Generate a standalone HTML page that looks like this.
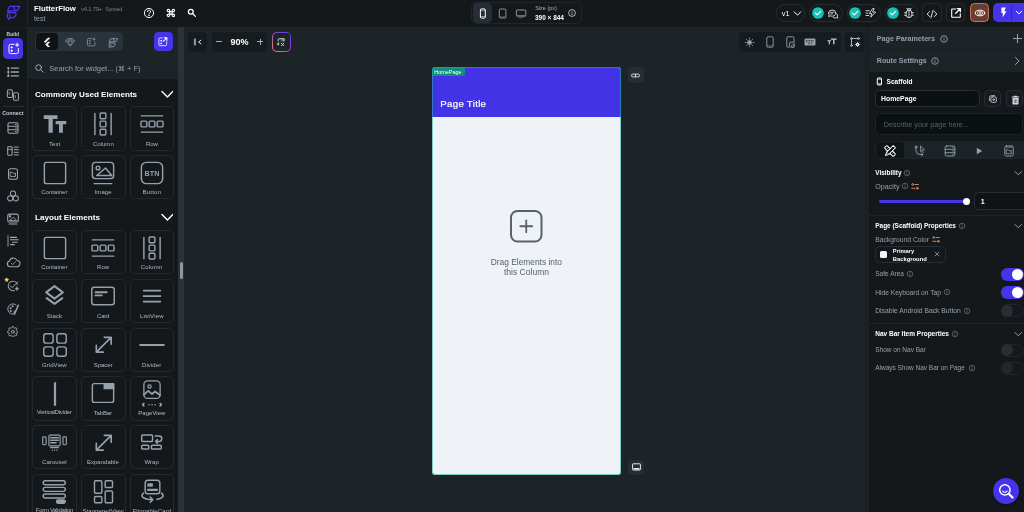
<!DOCTYPE html>
<html lang="en"><head><meta charset="utf-8"><title>FlutterFlow - test</title>
<style>
html,body{margin:0;padding:0}
body{width:1024px;height:512px;overflow:hidden;position:relative;background:#1d2428;font-family:"Liberation Sans",sans-serif}
.a{position:absolute;box-sizing:border-box;display:block}
.t{white-space:nowrap}
#root{position:absolute;left:0;top:0;width:1024px;height:512px;overflow:hidden;will-change:transform}
</style></head><body><div id="root">
<div class="a" style="left:0px;top:0px;width:1024px;height:27px;background:#14181b;"></div>
<div class="a" style="left:0px;top:27px;width:27px;height:485px;background:#14181b;"></div>
<div class="a" style="left:27px;top:0px;width:1px;height:512px;background:#1d2428;"></div>
<div class="a" style="left:28px;top:27px;width:150px;height:52px;background:#1d2428;"></div>
<div class="a" style="left:28px;top:79px;width:150px;height:433px;background:#14181b;"></div>
<div class="a" style="left:178px;top:27px;width:5.8px;height:485px;background:#2a323a;"></div>
<div class="a" style="left:179.5px;top:262px;width:3px;height:17px;background:#8b97a2;border-radius:1.5px;"></div>
<div class="a" style="left:868.6px;top:27px;width:156px;height:45px;background:#1d2428;"></div>
<div class="a" style="left:868.6px;top:72px;width:156px;height:440px;background:#14181b;"></div>
<div class="a" style="left:864.6px;top:27px;width:4px;height:485px;background:#1a2024;"></div>
<svg class="a" style="left:5px;top:4px" width="18" height="18" viewBox="5 4 18 18" fill="none" stroke="#4b39ef" stroke-width="1.25" stroke-linejoin="round"><path d="M9.6 6.4H19.8L17 10.8H7.6zM13.200 6.400L15.100 10.600M8.500 11L9.400 12.600H15.100L16.200 14.500L14.100 17.700H10.300L8.800 19.300L7.100 16.400zM9.400 14.300L10.300 17.700"/></svg>
<span class="a t" style="left:34.00px;top:4px;font-size:7.79px;line-height:9px;color:#fff;font-weight:700;">FlutterFlow</span>
<span class="a t" style="left:81.00px;top:6px;font-size:6.00px;line-height:6px;color:#73808b;letter-spacing:-0.273px;">v4.1.79+</span>
<span class="a t" style="left:105.30px;top:6px;font-size:5.60px;line-height:6px;color:#73808b;letter-spacing:-0.297px;">Synced</span>
<span class="a t" style="left:34.10px;top:15px;font-size:7.01px;line-height:7px;color:#95a1ac;">test</span>
<svg class="a" style="left:143px;top:7.4px" width="12" height="12" viewBox="-6 -6 12 12" fill="none" stroke="#fff" stroke-width="1"><circle r="4.6"/><path d="M-1.5 -1.3a1.5 1.5 0 1 1 2.3 1.2c-.6.4-.8.7-.8 1.3" stroke-linecap="round"/><circle cy="2.7" r=".35" fill="#fff"/></svg>
<svg class="a" style="left:165.6px;top:8.2px" width="9.8" height="9.8" viewBox="0 0 24 24" fill="none" stroke="#fff" stroke-width="2.8"><path d="M9 9V6a3 3 0 1 0-3 3h12a3 3 0 1 0-3-3v12a3 3 0 1 0 3-3H6a3 3 0 1 0 3 3z"/></svg>
<svg class="a" style="left:187.2px;top:8.2px" width="9.6" height="9.6" viewBox="0 0 24 24" fill="none" stroke="#fff" stroke-width="3.2" stroke-linecap="round"><circle cx="9.5" cy="9.5" r="6"/><path d="M14.5 14.5L21 21"/></svg>
<div class="a" style="left:471.3px;top:1.5px;width:110.4px;height:22px;border:1px solid #20272c;border-radius:5.5px;"></div>
<div class="a" style="left:473.3px;top:3.2px;width:18.8px;height:19.4px;background:#262d34;border-radius:4.5px;"></div>
<svg class="a" style="left:479px;top:7.6px" width="8" height="11" viewBox="0 0 8 11" fill="none" stroke="#fff" stroke-width="1"><rect x="1.400" y="0.900" width="4.900" height="9.200" rx="1.100"/><path d="M1.400 2.400h4.900M1.400 8.500h4.900" stroke-width=".5"/></svg>
<svg class="a" style="left:497.5px;top:7.5px" width="9" height="11" viewBox="0 0 9 11" fill="none" stroke="#95a1ac" stroke-width=".9"><rect x="1.300" y="1" width="6.600" height="9" rx="1.200"/><path d="M1.300 8.800h6.600" stroke-width=".5"/></svg>
<svg class="a" style="left:515px;top:7.5px" width="12" height="11" viewBox="0 0 12 11" fill="none" stroke="#95a1ac" stroke-width=".9"><rect x="1.400" y="2" width="9.400" height="5.800" rx=".6"/><path d="M4 9.800h4.200M1.400 8.600h9.400" stroke-width=".5"/></svg>
<span class="a t" style="left:535.20px;top:5px;font-size:5.53px;line-height:6px;color:#a3aeb8;">Size (px)</span>
<span class="a t" style="left:535.00px;top:14px;font-size:6.48px;line-height:7px;color:#fff;font-weight:700;">390 × 844</span>
<svg class="a" style="left:567px;top:8px" width="10" height="10" viewBox="-5 -5 10 10" fill="none" stroke="#e0e3e7" stroke-width="0.75"><circle r="3.4"/><path d="M0 -0.300V1.600M0 -1.700V-1.600" stroke-linecap="round" stroke-width=".7"/></svg>
<div class="a" style="left:776px;top:4.2px;width:29px;height:17.5px;border:1px solid #262d34;border-radius:9px;"></div>
<span class="a t" style="left:781.80px;top:9px;font-size:7.39px;line-height:9px;color:#fff;">v1</span>
<svg class="a" style="left:792.5px;top:9.5px" width="9" height="7" viewBox="0 0 9 7" fill="none" stroke="#fff" stroke-width="1" stroke-linecap="round" stroke-linejoin="round"><path d="M1.2 1.8L4.500 5.200L7.800 1.800"/></svg>
<div class="a" style="left:809.2px;top:4.2px;width:33.39999999999998px;height:17.5px;border:1px solid #262d34;border-radius:9px;"></div>
<svg class="a" style="left:811.5px;top:7px" width="12" height="12" viewBox="-6 -6 12 12"><circle r="5.85" fill="#19c3b1"/><path d="M-2.6 0.1L-0.8 1.9L2.7 -1.7" fill="none" stroke="#fff" stroke-width="1.1" stroke-linecap="round" stroke-linejoin="round"/></svg>
<svg class="a" style="left:825.70px;top:6.50px" width="14" height="14" viewBox="-7 -7 14 14" fill="none" stroke="#e0e3e7" stroke-width="0.9" stroke-linecap="round" stroke-linejoin="round"><path d="M-4.400 -0.900a3.600 3.100 0 0 1 7.200 0a3.600 3.100 0 0 1 -5.200 2.800l-1.900 0.600l0.500 -1.700a3 3 0 0 1 -0.600 -1.700z"/><path d="M-2.400 -1.700h3.300M-2.400 -0.100h2" stroke-width=".8"/><path d="M0.300 3.500a3 2.600 0 0 0 3.300 0.200l1.200 0.400l-0.400 -1.200a2.800 2.600 0 0 0 -0.700 -3.200"/></svg>
<div class="a" style="left:846.6px;top:4.2px;width:34.39999999999998px;height:17.5px;border:1px solid #262d34;border-radius:9px;"></div>
<svg class="a" style="left:849px;top:7px" width="12" height="12" viewBox="-6 -6 12 12"><circle r="5.85" fill="#19c3b1"/><path d="M-2.6 0.1L-0.8 1.9L2.7 -1.7" fill="none" stroke="#fff" stroke-width="1.1" stroke-linecap="round" stroke-linejoin="round"/></svg>
<svg class="a" style="left:863.60px;top:6.40px" width="14" height="14" viewBox="-7 -7 14 14" fill="none" stroke="#e0e3e7" stroke-width="0.9" stroke-linecap="round" stroke-linejoin="round"><path d="M1.500 -4.200L-1.800 0.600H0.800L-0.300 4.200L4.600 -1H1.600L3 -4.200Z"/><path d="M-5 -2.300h3.200M-5 0.100h1.800M-5 2.500h2.800"/></svg>
<div class="a" style="left:885.2px;top:4.2px;width:33.0px;height:17.5px;border:1px solid #262d34;border-radius:9px;"></div>
<svg class="a" style="left:887.2px;top:7px" width="12" height="12" viewBox="-6 -6 12 12"><circle r="5.85" fill="#19c3b1"/><path d="M-2.6 0.1L-0.8 1.9L2.7 -1.7" fill="none" stroke="#fff" stroke-width="1.1" stroke-linecap="round" stroke-linejoin="round"/></svg>
<svg class="a" style="left:901.60px;top:6.40px" width="14" height="14" viewBox="-7 -7 14 14" fill="none" stroke="#e0e3e7" stroke-width="0.9" stroke-linecap="round" stroke-linejoin="round"><rect x="-2.900" y="-2.800" width="5.800" height="7.400" rx="2.800"/><path d="M0 -2.800V4.600M-1.700 -3.100a1.700 1.700 0 0 1 3.400 0M-2.900 -0.300H-4.500M-2.900 2.300H-4.500M2.900 -0.300H4.500M2.900 2.300H4.500M-2.200 -4.600l.8 .9M2.200 -4.600l-.8 .9" stroke-width=".85"/></svg>
<div class="a" style="left:922.2px;top:3px;width:19.4px;height:19.3px;border:1px solid #232a30;border-radius:4.5px;"></div>
<svg class="a" style="left:925.00px;top:6.50px" width="14" height="14" viewBox="-7 -7 14 14" fill="none" stroke="#e0e3e7" stroke-width="0.95" stroke-linecap="round" stroke-linejoin="round"><path d="M-2.300 -2.600L-4.800 0L-2.300 2.600M2.300 -2.600L4.800 0L2.300 2.600M1.100 -3.800L-1.100 3.800"/></svg>
<div class="a" style="left:946px;top:3px;width:19.4px;height:19.3px;border:1px solid #232a30;border-radius:4.5px;"></div>
<svg class="a" style="left:949.10px;top:6.40px" width="14" height="14" viewBox="-7 -7 14 14" fill="none" stroke="#fff" stroke-width="0.9" stroke-linecap="round" stroke-linejoin="round"><path d="M-0.500 -4H-3.700a.6 .6 0 0 0 -.6 .6V3.700a.6 .6 0 0 0 .6 .6H3.700a.6 .6 0 0 0 .6 -.6V0.800" stroke-width="1.100"/><path d="M-0.300 0.300L4.200 -4.200M1.200 -4.400H4.400V-1.200" stroke-width="1.300"/></svg>
<div class="a" style="left:969.8px;top:3px;width:19.4px;height:19.3px;background:#6a3e2f;border:1px solid #c8745a;border-radius:4.5px;"></div>
<svg class="a" style="left:972.60px;top:5.90px" width="14" height="14" viewBox="-7 -7 14 14" fill="none" stroke="#fff" stroke-width="0.95" stroke-linecap="round" stroke-linejoin="round"><ellipse rx="4.700" ry="2.800"/><circle cx="-0.900" r="1.750" stroke-width=".55"/><circle cx="0.900" r="1.750" stroke-width=".55"/></svg>
<div class="a" style="left:993.2px;top:3px;width:40px;height:19.3px;background:#4534ea;border-radius:5px;"></div>
<div class="a" style="left:1011.4px;top:5px;width:0.8px;height:15.5px;background:#3527b8;"></div>
<svg class="a" style="left:998.700px;top:7.300px" width="9" height="11" viewBox="0 0 9 11" fill="#fff"><path d="M2.400 0.500h4.400L5.300 4.200h2.200L3.700 10.300V6H2.400z"/></svg>
<svg class="a" style="left:1014.700px;top:10px" width="8" height="6" viewBox="0 0 8 6" fill="none" stroke="#fff" stroke-width="1" stroke-linecap="round" stroke-linejoin="round"><path d="M1.300 1.300L4 3.900L6.700 1.300"/></svg>
<span class="a t" style="left:6.60px;top:31px;font-size:5.04px;line-height:6px;color:#c5ccd3;font-weight:700;">Build</span>
<div class="a" style="left:3px;top:38.4px;width:20.2px;height:20.2px;background:#4534ea;border-radius:4.5px;"></div>
<div class="a" style="left:0px;top:26.6px;width:27px;height:0.8px;background:#1a1f23;"></div>
<svg class="a" style="left:6.80px;top:42.40px" width="13.6" height="13.6" viewBox="0 0 24 24" fill="none" stroke="#fff" stroke-width="1.7" stroke-linecap="round" stroke-linejoin="round"><path d="M12.500 4H6.500a3 3 0 0 0-3 3v10.500a3 3 0 0 0 3 3h10.500a3 3 0 0 0 3-3v-6"/><circle cx="8" cy="9.500" r="1.100" fill="#fff"/><circle cx="8" cy="15.500" r="1.100" fill="#fff"/><path d="M18 1.800l1 2.400 2.400 1-2.400 1-1 2.400-1-2.400-2.400-1 2.400-1z" fill="#fff" stroke-width=".8"/></svg>
<svg class="a" style="left:4.90px;top:64.00px" width="16" height="16" viewBox="-8 -8 16 16" fill="none" stroke="#9ba7b2" stroke-width="1.05" stroke-linecap="round" stroke-linejoin="round"><path d="M-1.800 -3.900H5.400M-1.800 0H5.400M-1.800 3.900H5.400" stroke-width="1.400"/><path d="M-4.700 -3.900V3.900" stroke-width=".7"/><circle cx="-4.700" cy="-3.900" r="1.100" fill="#a3aeb8" stroke="none"/><circle cx="-4.700" cy="0" r="1.100" fill="#a3aeb8" stroke="none"/><circle cx="-4.700" cy="3.900" r="1.100" fill="#a3aeb8" stroke="none"/></svg>
<svg class="a" style="left:5.10px;top:86.50px" width="16" height="16" viewBox="-8 -8 16 16" fill="none" stroke="#9ba7b2" stroke-width="1.05" stroke-linecap="round" stroke-linejoin="round"><rect x="-5.600" y="-5.200" width="5" height="7.600" rx="1.400"/><rect x="0.500" y="-2.300" width="5" height="7.600" rx="1.400"/><path d="M-3.800 -2.800v2M2.300 0.700v2" stroke-width=".8"/></svg>
<div class="a" style="left:3px;top:105.9px;width:21px;height:0.8px;background:#262d34;"></div>
<span class="a t" style="left:2.20px;top:110px;font-size:5.35px;line-height:6px;color:#c5ccd3;font-weight:700;">Connect</span>
<svg class="a" style="left:4.75px;top:120.40px" width="16" height="16" viewBox="-8 -8 16 16" fill="none" stroke="#9ba7b2" stroke-width="1.05" stroke-linecap="round" stroke-linejoin="round"><rect x="-5" y="-5.200" width="10" height="10.400" rx="1.300"/><path d="M-5 -1.800H5M-5 1.800H5"/><path d="M2.300 -3.500h1.200M2.300 0h1.200M2.300 3.500h1.200" stroke-width=".8"/></svg>
<svg class="a" style="left:4.75px;top:142.90px" width="16" height="16" viewBox="-8 -8 16 16" fill="none" stroke="#9ba7b2" stroke-width="1.05" stroke-linecap="round" stroke-linejoin="round"><rect x="-5.300" y="-4.200" width="4.400" height="8.400" rx=".9"/><path d="M-5.300 -1.600h4.400" stroke-width=".8"/><path d="M1.200 -3.900H5.400M1.200 -1.300H5.400M1.200 1.300H5.400M1.200 3.900H5.400" stroke-width="1"/></svg>
<svg class="a" style="left:5.00px;top:165.50px" width="16" height="16" viewBox="-8 -8 16 16" fill="none" stroke="#9ba7b2" stroke-width="1.05" stroke-linecap="round" stroke-linejoin="round"><rect x="-4.500" y="-5.300" width="9" height="10.600" rx="2"/><path d="M-2.500 -1.800h1.700l.8 1h2.500v3.200h-5z" stroke-width=".9"/></svg>
<svg class="a" style="left:4.85px;top:188.30px" width="16" height="16" viewBox="-8 -8 16 16" fill="none" stroke="#9ba7b2" stroke-width="1.05" stroke-linecap="round" stroke-linejoin="round"><circle cx="0" cy="-2.500" r="2.600"/><circle cx="-2.800" cy="2.300" r="2.600"/><circle cx="2.800" cy="2.300" r="2.600"/></svg>
<svg class="a" style="left:4.85px;top:210.60px" width="16" height="16" viewBox="-8 -8 16 16" fill="none" stroke="#9ba7b2" stroke-width="1.05" stroke-linecap="round" stroke-linejoin="round"><rect x="-5.300" y="-4.900" width="10.600" height="7.800" rx="1.700"/><circle cx="-3" cy="-2.700" r=".7"/><path d="M-3.300 1.300L0.600 -1.800L3.500 1.300z" stroke-width=".9"/><path d="M-4 5H4"/></svg>
<svg class="a" style="left:4.60px;top:233.40px" width="16" height="16" viewBox="-8 -8 16 16" fill="none" stroke="#9ba7b2" stroke-width="1.05" stroke-linecap="round" stroke-linejoin="round"><path d="M-5 -5.300V5.300" stroke-width=".9"/><path d="M-2.500 -3.600H3.500M-2.500 -1.200H5.300M-0.500 1.200H4.200M-2.500 3.600H1.300" stroke-width="1.100"/></svg>
<svg class="a" style="left:5.00px;top:255.20px" width="16" height="16" viewBox="-8 -8 16 16" fill="none" stroke="#9ba7b2" stroke-width="1.05" stroke-linecap="round" stroke-linejoin="round"><path d="M-3 3.800a2.900 2.900 0 0 1-.5-5.700a4 4 0 0 1 7.500-.7a3.200 3.200 0 0 1-.4 6.400z"/><path d="M-1.600 0.300l1.300 1.300l2.700-2.900" stroke-width=".9"/></svg>
<svg class="a" style="left:5.30px;top:278.00px" width="16" height="16" viewBox="-8 -8 16 16" fill="none" stroke="#9ba7b2" stroke-width="1.05" stroke-linecap="round" stroke-linejoin="round"><path d="M4.300 -1.800a4.700 4.700 0 1 0 -3 6.200"/><path d="M-2.700 -0.200l1.900 1.900L4.600 -4" stroke-width="1"/><path d="M3.900 0.700l.6 1.400 1.400.6-1.400.6-.6 1.400-.6-1.400-1.400-.6 1.400-.6z" fill="#a3aeb8" stroke-width=".4"/></svg>
<svg class="a" style="left:4.200px;top:277px" width="5.400" height="5.400" viewBox="0 0 24 24" fill="#f9cf58"><path d="M12 1l3.400 7 7.600 1-5.500 5.300 1.300 7.700L12 18.300 5.200 22l1.300-7.700L1 9l7.600-1z"/></svg>
<svg class="a" style="left:4.75px;top:301.00px" width="16" height="16" viewBox="-8 -8 16 16" fill="none" stroke="#9ba7b2" stroke-width="0.95" stroke-linecap="round" stroke-linejoin="round"><path d="M3.200 -4.100a5.200 5.200 0 1 0 -3.200 9.300c1.200 0 1.500-.8 1-1.600c-.5-.9 0-1.800 1-1.800"/><circle cx="-2.600" cy="-0.800" r=".6"/><circle cx="-0.600" cy="-2.800" r=".6"/><circle cx="-2.300" cy="2" r=".6"/><path d="M5.300 -3.800L2.300 3.300L1.600 5" stroke-width="1.500"/></svg>
<svg class="a" style="left:6.90px;top:325.50px" width="11.6" height="11.6" viewBox="0 0 24 24" fill="none" stroke="#9ba7b2" stroke-width="2" stroke-linecap="round" stroke-linejoin="round"><circle cx="12" cy="12" r="3"/><path d="M19.400 15a1.650 1.650 0 0 0 .33 1.820l.06.060a2 2 0 1 1-2.830 2.830l-.06-.06a1.650 1.650 0 0 0-1.820-.33 1.650 1.650 0 0 0-1 1.510V21a2 2 0 0 1-4 0v-.09A1.650 1.650 0 0 0 9 19.400a1.650 1.650 0 0 0-1.820.33l-.06.060a2 2 0 1 1-2.830-2.830l.06-.06a1.650 1.650 0 0 0 .33-1.820 1.650 1.650 0 0 0-1.510-1H3a2 2 0 0 1 0-4h.09A1.650 1.650 0 0 0 4.600 9a1.650 1.650 0 0 0-.33-1.820l-.06-.06a2 2 0 1 1 2.830-2.830l.06.060a1.650 1.650 0 0 0 1.820.33H9a1.650 1.650 0 0 0 1-1.510V3a2 2 0 0 1 4 0v.09a1.650 1.650 0 0 0 1 1.510 1.650 1.650 0 0 0 1.820-.33l.06-.06a2 2 0 1 1 2.830 2.830l-.06.060a1.650 1.650 0 0 0-.33 1.820V9a1.650 1.650 0 0 0 1.510 1H21a2 2 0 0 1 0 4h-.09a1.650 1.650 0 0 0-1.510 1z"/></svg>
<div class="a" style="left:34.6px;top:32px;width:88.6px;height:19.3px;background:#2a323a;border-radius:5px;"></div>
<div class="a" style="left:35.6px;top:33px;width:22.2px;height:17.2px;background:#101315;border-radius:4px;"></div>
<svg class="a" style="left:42.300px;top:36.900px" width="9.6" height="10.500" viewBox="0 0 11 12" fill="#fff"><path d="M6.800 0.800h2.800L3.600 6.800 2.200 5.400zM6.800 5.400h2.800L6.400 8.600 9.600 11.600H6.800L3.700 8.600z"/></svg>
<svg class="a" style="left:64.60px;top:37.10px" width="10.4" height="10.4" viewBox="0 0 24 24" fill="none" stroke="#8c98a4" stroke-width="1.8" stroke-linecap="round" stroke-linejoin="round"><path d="M6.500 4h11l4.500 5.500L12 21 2 9.500z"/><path d="M2 9.500h20M9.300 4l-2 5.500L12 21l4.700-11.500-2-5.500M12 4v5.500" stroke-width="1.300"/></svg>
<svg class="a" style="left:86.10px;top:37.10px" width="10.4" height="10.4" viewBox="0 0 24 24" fill="none" stroke="#8c98a4" stroke-width="1.8" stroke-linecap="round" stroke-linejoin="round"><path d="M13 3.500H6a2.500 2.500 0 0 0-2.500 2.500v12A2.500 2.500 0 0 0 6 20.500h12a2.500 2.500 0 0 0 2.500-2.500v-6"/><circle cx="8.500" cy="9" r=".9"/><circle cx="8.500" cy="15" r=".9"/><path d="M18.500 1.500l1 2.500 2.500 1-2.500 1-1 2.500-1-2.500-2.500-1 2.500-1z" fill="#8c98a4" stroke-width=".6"/></svg>
<svg class="a" style="left:107px;top:36.500px" width="12" height="12" viewBox="4.500 4 17 17" fill="none" stroke="#8c98a4" stroke-width="1.300" stroke-linejoin="round"><path d="M9.600 6.400H19.800L17 10.800H7.600zM13.200 6.400L15.100 10.600M8.500 11L9.400 12.600H15.100L16.200 14.500L14.100 17.700H10.300L8.800 19.300L7.100 16.400zM9.400 14.300L10.300 17.700"/></svg>
<div class="a" style="left:153.6px;top:31.8px;width:19.4px;height:19.4px;background:#4534ea;border-radius:4.5px;"></div>
<svg class="a" style="left:157.40px;top:35.90px" width="11.6" height="11.6" viewBox="0 0 24 24" fill="none" stroke="#fff" stroke-width="1.7" stroke-linecap="round" stroke-linejoin="round"><path d="M11 4H6.500a2.500 2.500 0 0 0-2.500 2.500v11a2.500 2.500 0 0 0 2.500 2.500h11a2.500 2.500 0 0 0 2.500-2.500v-5.500"/><circle cx="8.500" cy="10" r=".9" fill="#fff"/><circle cx="8.500" cy="15.500" r=".9" fill="#fff"/><path d="M13 11L20 4M15 3.500H20.500V9" stroke-width="2.200"/></svg>
<svg class="a" style="left:33.55px;top:62.65px" width="10.5" height="10.5" viewBox="0 0 24 24" fill="none" stroke="#a3aeb8" stroke-width="2.2" stroke-linecap="round" stroke-linejoin="round"><circle cx="10.500" cy="10.500" r="6.500"/><path d="M15.500 15.500L21 21"/></svg>
<span class="a t" style="left:49.30px;top:64px;font-size:7.45px;line-height:9px;color:#95a1ac;">Search for widget... (⌘ + F)</span>
<span class="a t" style="left:35.00px;top:90px;font-size:8.11px;line-height:9px;color:#fff;font-weight:700;">Commonly Used Elements</span>
<svg class="a" style="left:160.6px;top:90.1px" width="12.8" height="8.4" viewBox="-1 -1.500 12.8 8.4" fill="none" stroke="#fff" stroke-width="1.4" stroke-linecap="round" stroke-linejoin="round"><path d="M0 0L5.4 5.4L10.8 0"/></svg>
<span class="a t" style="left:35.00px;top:213px;font-size:8.12px;line-height:9px;color:#fff;font-weight:700;">Layout Elements</span>
<svg class="a" style="left:160.6px;top:213.10000000000002px" width="12.8" height="8.4" viewBox="-1 -1.500 12.8 8.4" fill="none" stroke="#fff" stroke-width="1.4" stroke-linecap="round" stroke-linejoin="round"><path d="M0 0L5.4 5.4L10.8 0"/></svg>
<div class="a" style="left:32px;top:106.3px;width:44.8px;height:44.4px;border:1px solid #222a30;border-radius:5px;"></div>
<svg class="a" style="left:39.60px;top:109.10px" width="30" height="30" viewBox="0 0 24 24" fill="none" stroke="#95a1ac" stroke-width="1.15" stroke-linecap="round" stroke-linejoin="round"><path d="M3 5h11v3H10.200v11H6.800V8H3zM12.500 9.500h8.500v2.600h-2.700V19h-3.100v-6.900h-2.700z" fill="#95a1ac" stroke="none"/></svg>
<span class="a t" style="left:49.00px;top:141px;font-size:6.00px;line-height:6px;color:#b0bac3;letter-spacing:0.062px;">Text</span>
<div class="a" style="left:80.8px;top:106.3px;width:44.8px;height:44.4px;border:1px solid #222a30;border-radius:5px;"></div>
<svg class="a" style="left:88.40px;top:109.10px" width="30" height="30" viewBox="0 0 24 24" fill="none" stroke="#95a1ac" stroke-width="1.15" stroke-linecap="round" stroke-linejoin="round"><path d="M5.500 3.500v17M18.500 3.500v17"/><rect x="9.700" y="3.200" width="4.600" height="4.600" rx=".8"/><rect x="9.700" y="9.700" width="4.600" height="4.600" rx=".8"/><rect x="9.700" y="16.200" width="4.600" height="4.600" rx=".8"/></svg>
<span class="a t" style="left:92.75px;top:141px;font-size:6.00px;line-height:6px;color:#b0bac3;letter-spacing:0.062px;">Column</span>
<div class="a" style="left:129.5px;top:106.3px;width:44.8px;height:44.4px;border:1px solid #222a30;border-radius:5px;"></div>
<svg class="a" style="left:137.10px;top:109.10px" width="30" height="30" viewBox="0 0 24 24" fill="none" stroke="#95a1ac" stroke-width="1.15" stroke-linecap="round" stroke-linejoin="round"><path d="M3.500 5.500h17M3.500 18.500h17"/><rect x="3.200" y="9.700" width="4.600" height="4.600" rx=".8"/><rect x="9.700" y="9.700" width="4.600" height="4.600" rx=".8"/><rect x="16.200" y="9.700" width="4.600" height="4.600" rx=".8"/></svg>
<span class="a t" style="left:146.00px;top:141px;font-size:6.00px;line-height:6px;color:#b0bac3;letter-spacing:-0.034px;">Row</span>
<div class="a" style="left:32px;top:155px;width:44.8px;height:44.4px;border:1px solid #222a30;border-radius:5px;"></div>
<svg class="a" style="left:39.60px;top:157.80px" width="30" height="30" viewBox="0 0 24 24" fill="none" stroke="#95a1ac" stroke-width="1.15" stroke-linecap="round" stroke-linejoin="round"><rect x="3.500" y="3.500" width="17" height="17" rx="1.500"/></svg>
<span class="a t" style="left:41.25px;top:189px;font-size:6.00px;line-height:6px;color:#b0bac3;letter-spacing:0.026px;">Container</span>
<div class="a" style="left:80.8px;top:155px;width:44.8px;height:44.4px;border:1px solid #222a30;border-radius:5px;"></div>
<svg class="a" style="left:88.40px;top:157.80px" width="30" height="30" viewBox="0 0 24 24" fill="none" stroke="#95a1ac" stroke-width="1.15" stroke-linecap="round" stroke-linejoin="round"><rect x="3.500" y="3.500" width="17" height="13" rx="2.500"/><circle cx="8" cy="8" r="1.500"/><path d="M7 14l7-6 5 6zM5 20.500h14"/></svg>
<span class="a t" style="left:94.50px;top:189px;font-size:6.00px;line-height:6px;color:#b0bac3;letter-spacing:0.115px;">Image</span>
<div class="a" style="left:129.5px;top:155px;width:44.8px;height:44.4px;border:1px solid #222a30;border-radius:5px;"></div>
<svg class="a" style="left:137.10px;top:157.80px" width="30" height="30" viewBox="0 0 24 24" fill="none" stroke="#95a1ac" stroke-width="1.15" stroke-linecap="round" stroke-linejoin="round"><rect x="3.500" y="3.500" width="17" height="17" rx="4"/><text x="12" y="14.200" font-size="5.800" font-weight="700" font-family="Liberation Sans,sans-serif" text-anchor="middle" fill="#95a1ac" stroke="none">BTN</text></svg>
<span class="a t" style="left:142.50px;top:189px;font-size:6.00px;line-height:6px;color:#b0bac3;letter-spacing:0.234px;">Button</span>
<div class="a" style="left:32px;top:230px;width:44.8px;height:44.4px;border:1px solid #222a30;border-radius:5px;"></div>
<svg class="a" style="left:39.60px;top:232.80px" width="30" height="30" viewBox="0 0 24 24" fill="none" stroke="#95a1ac" stroke-width="1.15" stroke-linecap="round" stroke-linejoin="round"><rect x="3.500" y="3.500" width="17" height="17" rx="1.500"/></svg>
<span class="a t" style="left:41.25px;top:264px;font-size:6.00px;line-height:6px;color:#b0bac3;letter-spacing:0.026px;">Container</span>
<div class="a" style="left:80.8px;top:230px;width:44.8px;height:44.4px;border:1px solid #222a30;border-radius:5px;"></div>
<svg class="a" style="left:88.40px;top:232.80px" width="30" height="30" viewBox="0 0 24 24" fill="none" stroke="#95a1ac" stroke-width="1.15" stroke-linecap="round" stroke-linejoin="round"><path d="M3.500 5.500h17M3.500 18.500h17"/><rect x="3.200" y="9.700" width="4.600" height="4.600" rx=".8"/><rect x="9.700" y="9.700" width="4.600" height="4.600" rx=".8"/><rect x="16.200" y="9.700" width="4.600" height="4.600" rx=".8"/></svg>
<span class="a t" style="left:97.00px;top:264px;font-size:6.00px;line-height:6px;color:#b0bac3;letter-spacing:0.082px;">Row</span>
<div class="a" style="left:129.5px;top:230px;width:44.8px;height:44.4px;border:1px solid #222a30;border-radius:5px;"></div>
<svg class="a" style="left:137.10px;top:232.80px" width="30" height="30" viewBox="0 0 24 24" fill="none" stroke="#95a1ac" stroke-width="1.15" stroke-linecap="round" stroke-linejoin="round"><path d="M5.500 3.500v17M18.500 3.500v17"/><rect x="9.700" y="3.200" width="4.600" height="4.600" rx=".8"/><rect x="9.700" y="9.700" width="4.600" height="4.600" rx=".8"/><rect x="9.700" y="16.200" width="4.600" height="4.600" rx=".8"/></svg>
<span class="a t" style="left:140.75px;top:264px;font-size:6.00px;line-height:6px;color:#b0bac3;letter-spacing:0.179px;">Column</span>
<div class="a" style="left:32px;top:278.75px;width:44.8px;height:44.4px;border:1px solid #222a30;border-radius:5px;"></div>
<svg class="a" style="left:42.10px;top:282.75px" width="25" height="25" viewBox="0 0 24 24" fill="none" stroke="#95a1ac" stroke-width="1.9319999999999997" stroke-linecap="round" stroke-linejoin="round"><path d="M12 3l8 6-8 6-8-6z"/><path d="M4.500 14.500L12 20l7.500-5.500"/></svg>
<span class="a t" style="left:46.75px;top:313px;font-size:6.00px;line-height:6px;color:#b0bac3;letter-spacing:0.049px;">Stack</span>
<div class="a" style="left:80.8px;top:278.75px;width:44.8px;height:44.4px;border:1px solid #222a30;border-radius:5px;"></div>
<svg class="a" style="left:88.40px;top:281.05px" width="30" height="30" viewBox="0 0 24 24" fill="none" stroke="#95a1ac" stroke-width="1.15" stroke-linecap="round" stroke-linejoin="round"><rect x="3" y="5" width="18" height="14" rx="2"/><path d="M6 9h9M6 11.500h5" stroke-width="1.500"/></svg>
<span class="a t" style="left:97.00px;top:313px;font-size:6.00px;line-height:6px;color:#b0bac3;letter-spacing:-0.189px;">Card</span>
<div class="a" style="left:129.5px;top:278.75px;width:44.8px;height:44.4px;border:1px solid #222a30;border-radius:5px;"></div>
<svg class="a" style="left:137.10px;top:281.05px" width="30" height="30" viewBox="0 0 24 24" fill="none" stroke="#95a1ac" stroke-width="1.15" stroke-linecap="round" stroke-linejoin="round"><path d="M5.300 7.600h13.400M5.300 12h13.400M5.300 16.400h13.400" stroke-width="1.400"/></svg>
<span class="a t" style="left:140.00px;top:313px;font-size:6.00px;line-height:6px;color:#b0bac3;letter-spacing:0.189px;">ListView</span>
<div class="a" style="left:32px;top:327.5px;width:44.8px;height:44.4px;border:1px solid #222a30;border-radius:5px;"></div>
<svg class="a" style="left:39.60px;top:330.30px" width="30" height="30" viewBox="0 0 24 24" fill="none" stroke="#95a1ac" stroke-width="1.15" stroke-linecap="round" stroke-linejoin="round"><rect x="3" y="3" width="7.500" height="7.500" rx="2"/><rect x="13.500" y="3" width="7.500" height="7.500" rx="2"/><rect x="3" y="13.500" width="7.500" height="7.500" rx="2"/><rect x="13.500" y="13.500" width="7.500" height="7.500" rx="2"/></svg>
<span class="a t" style="left:42.00px;top:362px;font-size:6.00px;line-height:6px;color:#b0bac3;letter-spacing:0.065px;">GridView</span>
<div class="a" style="left:80.8px;top:327.5px;width:44.8px;height:44.4px;border:1px solid #222a30;border-radius:5px;"></div>
<svg class="a" style="left:90.65px;top:332.05px" width="25.5" height="25.5" viewBox="0 0 24 24" fill="none" stroke="#95a1ac" stroke-width="1.5558823529411765" stroke-linecap="round" stroke-linejoin="round"><path d="M5.500 18.500l13-13M12.500 5h6.500v6.500M5 12.500V19h6.500"/></svg>
<span class="a t" style="left:93.75px;top:362px;font-size:6.00px;line-height:6px;color:#b0bac3;letter-spacing:-0.044px;">Spacer</span>
<div class="a" style="left:129.5px;top:327.5px;width:44.8px;height:44.4px;border:1px solid #222a30;border-radius:5px;"></div>
<svg class="a" style="left:137.10px;top:330.30px" width="30" height="30" viewBox="0 0 24 24" fill="none" stroke="#95a1ac" stroke-width="1.15" stroke-linecap="round" stroke-linejoin="round"><path d="M2.500 12h19" stroke-width="1.500"/></svg>
<span class="a t" style="left:142.00px;top:362px;font-size:6.00px;line-height:6px;color:#b0bac3;letter-spacing:0.083px;">Divider</span>
<div class="a" style="left:32px;top:376.25px;width:44.8px;height:44.4px;border:1px solid #222a30;border-radius:5px;"></div>
<svg class="a" style="left:39.60px;top:378.55px" width="30" height="30" viewBox="0 0 24 24" fill="none" stroke="#95a1ac" stroke-width="1.15" stroke-linecap="round" stroke-linejoin="round"><path d="M12 2.600v18.800" stroke-width="1.800" stroke-linecap="butt"/></svg>
<span class="a t" style="left:36.75px;top:409px;font-size:6.00px;line-height:6px;color:#b0bac3;letter-spacing:-0.223px;">VerticalDivider</span>
<div class="a" style="left:80.8px;top:376.25px;width:44.8px;height:44.4px;border:1px solid #222a30;border-radius:5px;"></div>
<svg class="a" style="left:88.40px;top:378.25px" width="30" height="30" viewBox="0 0 24 24" fill="none" stroke="#95a1ac" stroke-width="1.15" stroke-linecap="round" stroke-linejoin="round"><rect x="3.500" y="4.500" width="17" height="15" rx="1.500"/><path d="M13 4.500h7.500v4H13z" fill="#95a1ac"/></svg>
<span class="a t" style="left:93.75px;top:410px;font-size:6.00px;line-height:6px;color:#b0bac3;letter-spacing:-0.169px;">TabBar</span>
<div class="a" style="left:129.5px;top:376.25px;width:44.8px;height:44.4px;border:1px solid #222a30;border-radius:5px;"></div>
<svg class="a" style="left:137.10px;top:378.55px" width="30" height="30" viewBox="0 0 24 24" fill="none" stroke="#95a1ac" stroke-width="1.035" stroke-linecap="round" stroke-linejoin="round"><rect x="5.500" y="1.500" width="13" height="14" rx="3"/><circle cx="10" cy="6" r="1.300"/><path d="M5.500 12.500l3.500-3 3 2.500 2.500-2 4 3" stroke-width="1.400"/><path d="M9.500 20.500h.1M12 20.500h.1M14.500 20.500h.1M5.500 19.500l-1 1 1 1M18.500 19.500l1 1-1 1" stroke-width="1.200"/></svg>
<span class="a t" style="left:138.25px;top:410px;font-size:6.00px;line-height:6px;color:#b0bac3;letter-spacing:0.042px;">PageView</span>
<div class="a" style="left:32px;top:425px;width:44.8px;height:44.4px;border:1px solid #222a30;border-radius:5px;"></div>
<svg class="a" style="left:41.10px;top:429.00px" width="27" height="27" viewBox="0 0 24 24" fill="none" stroke="#95a1ac" stroke-width="1.0222222222222221" stroke-linecap="round" stroke-linejoin="round"><rect x="7" y="5.500" width="10" height="9.500" rx="1"/><rect x="1.500" y="7" width="3" height="7" rx=".8"/><rect x="19.500" y="7" width="3" height="7" rx=".8"/><path d="M8.500 7.800h7M8.500 10h7M8.500 12.200h5M8.500 16.600h7M10 18.800h.1M12 18.800h.1M14 18.800h.1" stroke-width="1.200"/></svg>
<span class="a t" style="left:42.00px;top:459px;font-size:6.00px;line-height:6px;color:#b0bac3;letter-spacing:0.092px;">Carousel</span>
<div class="a" style="left:80.8px;top:425px;width:44.8px;height:44.4px;border:1px solid #222a30;border-radius:5px;"></div>
<svg class="a" style="left:90.65px;top:429.55px" width="25.5" height="25.5" viewBox="0 0 24 24" fill="none" stroke="#95a1ac" stroke-width="1.5558823529411765" stroke-linecap="round" stroke-linejoin="round"><path d="M5.500 18.500l13-13M12.500 5h6.500v6.500M5 12.500V19h6.500"/></svg>
<span class="a t" style="left:87.00px;top:459px;font-size:6.00px;line-height:6px;color:#b0bac3;letter-spacing:0.006px;">Expandable</span>
<div class="a" style="left:129.5px;top:425px;width:44.8px;height:44.4px;border:1px solid #222a30;border-radius:5px;"></div>
<svg class="a" style="left:139.10px;top:429.30px" width="26" height="26" viewBox="0 0 24 24" fill="none" stroke="#95a1ac" stroke-width="1.3269230769230769" stroke-linecap="round" stroke-linejoin="round"><rect x="2.500" y="5.500" width="10" height="6" rx=".8"/><rect x="2.500" y="15" width="6.500" height="3.500" rx=".8"/><rect x="11.500" y="15" width="9" height="3.500" rx=".8"/><path d="M15 6.500h3.500a2.500 2.500 0 0 1 0 5H15.500M17 9.800l-1.700 1.700 1.700 1.700" stroke-width="1.400"/></svg>
<span class="a t" style="left:144.50px;top:459px;font-size:6.00px;line-height:6px;color:#b0bac3;letter-spacing:0.006px;">Wrap</span>
<div class="a" style="left:32px;top:473.75px;width:44.8px;height:44.4px;border:1px solid #222a30;border-radius:5px;"></div>
<svg class="a" style="left:41.35px;top:478.30px" width="26.5" height="26.5" viewBox="0 0 24 24" fill="none" stroke="#95a1ac" stroke-width="1.3018867924528301" stroke-linecap="round" stroke-linejoin="round"><rect x="2" y="2.500" width="20" height="3.600" rx="1.800"/><rect x="2" y="8.500" width="20" height="3.600" rx="1.800"/><rect x="2" y="14.500" width="20" height="3.600" rx="1.800"/><rect x="14" y="19.800" width="8" height="3" rx="1.500" fill="#95a1ac"/></svg>
<span class="a t" style="left:35.75px;top:507px;font-size:6.00px;line-height:6px;color:#b0bac3;letter-spacing:-0.288px;">Form Validation</span>
<div class="a" style="left:80.8px;top:473.75px;width:44.8px;height:44.4px;border:1px solid #222a30;border-radius:5px;"></div>
<svg class="a" style="left:89.90px;top:477.75px" width="27" height="27" viewBox="0 0 24 24" fill="none" stroke="#95a1ac" stroke-width="1.2777777777777777" stroke-linecap="round" stroke-linejoin="round"><rect x="4" y="2.500" width="6.500" height="11" rx="1"/><rect x="13.500" y="2.500" width="6.500" height="6" rx="1"/><rect x="4" y="16.500" width="6.500" height="5.500" rx="1"/><rect x="13.500" y="11.500" width="6.500" height="10.500" rx="1"/></svg>
<span class="a t" style="left:82.50px;top:508px;font-size:6.00px;line-height:6px;color:#b0bac3;letter-spacing:0.051px;">StaggeredView</span>
<div class="a" style="left:129.5px;top:473.75px;width:44.8px;height:44.4px;border:1px solid #222a30;border-radius:5px;"></div>
<svg class="a" style="left:138.60px;top:477.75px" width="27" height="27" viewBox="0 0 24 24" fill="none" stroke="#95a1ac" stroke-width="1.2777777777777777" stroke-linecap="round" stroke-linejoin="round"><rect x="5.500" y="2" width="13" height="12" rx="2.500"/><rect x="8" y="5" width="4" height="2.400" fill="#95a1ac" stroke-width=".6"/><path d="M8 10.500h8" stroke-width="2"/><path d="M4 13.500c-3 2.500-1 5.500 8 5.800M20 13.500c3 2.500 1 4.500-4 5.500M10 17l2.300 2.300L10 21.600" stroke-width="1.400"/></svg>
<span class="a t" style="left:132.50px;top:508px;font-size:6.00px;line-height:6px;color:#b0bac3;letter-spacing:0.107px;">FlippableCard</span>
<div class="a" style="left:188px;top:32px;width:19px;height:19.5px;background:#161b1f;border-radius:4.5px;"></div>
<svg class="a" style="left:192px;top:36.500px" width="11" height="11" viewBox="0 0 11 11" fill="none" stroke-linecap="round" stroke-linejoin="round"><path d="M2.900 1.600v6.800" stroke="#8c98a4" stroke-width="2.100" stroke-linecap="butt"/><path d="M9 3.200L6.600 5l2.400 1.800" stroke="#e0e3e7" stroke-width="1"/></svg>
<div class="a" style="left:211.5px;top:32px;width:55.5px;height:19.5px;background:#161b1f;border-radius:4.5px;"></div>
<div class="a" style="left:216px;top:41.3px;width:6.2px;height:1px;background:#a3aeb8;"></div>
<span class="a t" style="left:230.50px;top:37px;font-size:9.04px;line-height:10px;color:#fff;font-weight:700;">90%</span>
<div class="a" style="left:256.8px;top:41.4px;width:6.4px;height:1px;background:#a3aeb8;"></div>
<div class="a" style="left:259.5px;top:38.7px;width:1px;height:6.4px;background:#a3aeb8;"></div>
<div class="a" style="left:271.500px;top:31.500px;width:19.500px;height:20px;border-radius:5px;background:linear-gradient(225deg,#4b39ef 0%,#9b45c9 45%,#ee8b60 100%)"></div>
<div class="a" style="left:272.5px;top:32.5px;width:17.5px;height:18px;background:#1d2428;border-radius:4px;"></div>
<svg class="a" style="left:276.35px;top:36.55px" width="10.5" height="10.5" viewBox="0 0 24 24" fill="none" stroke="#e0e3e7" stroke-width="2" stroke-linecap="round" stroke-linejoin="round"><path d="M5 9V6a2 2 0 0 1 2-2h12v3M13 4c2 1 2 3 0 5M5 13v5M3 16l2 2 2-2M12 14l6 6M18 14l-6 6M17.500 7.500c2 0 2 1 0 2"/></svg>
<div class="a" style="left:739px;top:32px;width:102px;height:19.5px;background:#161b1f;border-radius:4.5px;"></div>
<svg class="a" style="left:744.10px;top:36.50px" width="11" height="11" viewBox="0 0 24 24" fill="none" stroke="#95a1ac" stroke-width="1.8" stroke-linecap="round" stroke-linejoin="round"><circle cx="12" cy="12" r="4.200" fill="#95a1ac"/><path d="M12 2.500v2.500M12 19v2.500M2.500 12H5M19 12h2.500M5.300 5.300L7 7M17 17l1.700 1.700M18.700 5.300L17 7M7 17l-1.700 1.700"/></svg>
<svg class="a" style="left:766px;top:36px" width="8" height="12" viewBox="0 0 8 12" fill="none" stroke="#95a1ac" stroke-width=".9"><rect x="0.800" y="0.800" width="6.400" height="10.400" rx="1.300"/><path d="M0.800 9.800h6.400" stroke-width=".5"/></svg>
<svg class="a" style="left:786px;top:36px" width="9" height="12" viewBox="0 0 9 12" fill="none" stroke="#95a1ac" stroke-width=".9"><path d="M3 11.200H2a1.200 1.200 0 0 1-1.200-1.200V2A1.200 1.200 0 0 1 2 .800h4.800A1.200 1.200 0 0 1 8 2v4"/><rect x="3.600" y="6.200" width="4.600" height="5" rx=".5"/><rect x="5.700" y="8.600" width="2.500" height="2.600" rx=".3" stroke-width=".6"/></svg>
<svg class="a" style="left:804px;top:38px" width="12" height="8" viewBox="0 0 12 8"><rect x=".5" y=".5" width="11" height="7" rx="1.200" fill="#95a1ac"/><path d="M2 2.500h8M2 4h8M4 5.800h4" stroke="#161b1f" stroke-width=".7" stroke-dasharray="1 .6"/></svg>
<svg class="a" style="left:826.800px;top:38.400px" width="10.200" height="6.800" viewBox="0 0 12 8" fill="#c5ccd3"><path d="M4.600 0.600h6.800v1.500H8.800v5.400H7.200V2.100H4.600zM0.500 2.600h4.400v1.300H3.400v3.600H2v-3.600H.5z"/></svg>
<div class="a" style="left:845.2px;top:32px;width:19.3px;height:19.5px;background:#161b1f;border-radius:4.5px;"></div>
<svg class="a" style="left:848.80px;top:36.00px" width="12" height="12" viewBox="0 0 24 24" fill="none" stroke="#e0e3e7" stroke-width="1.5" stroke-linecap="round" stroke-linejoin="round"><circle cx="5" cy="5" r="1.800"/><circle cx="19" cy="5" r="1.800"/><circle cx="5" cy="19" r="1.800"/><path d="M7 5h10M5 7v10"/><circle cx="17" cy="17" r="2.200" stroke-width="2.600"/><path d="M17 12.500v1.500M17 20v1.500M12.500 17h1.500M20 17h1.500M13.800 13.800l1 1M19.200 19.200l1 1M20.200 13.800l-1 1M14.800 19.200l-1 1" stroke-width="1.300"/></svg>
<div class="a" style="left:432px;top:67px;width:188.700px;height:407.500px;border-radius:3.500px;background:#eff2f7;overflow:hidden"><div class="a" style="left:0;top:0;width:189px;height:50.200px;background:#4333e6"></div><div class="a" style="left:0;top:0;width:32.700px;height:9.300px;background:#0e8f7f;border-bottom-right-radius:2px"></div></div>
<div class="a" style="left:432px;top:67px;width:188.700px;height:407.500px;border-radius:3.500px;border:1px solid rgba(25,180,160,.55)"></div>
<span class="a t" style="left:434.30px;top:69px;font-size:5.44px;line-height:6px;color:#fff;">HomePage</span>
<span class="a t" style="left:440.30px;top:98px;font-size:9.70px;line-height:11px;color:#fff;letter-spacing:0.286px;-webkit-text-stroke:0.2px #fff;">Page Title</span>
<svg class="a" style="left:509px;top:209px" width="35" height="35" viewBox="0 0 35 35" fill="none" stroke="#57636c" stroke-linecap="round"><rect x="2" y="2" width="30.500" height="30.500" rx="6.500" stroke-width="2"/><path d="M17.250 11.300v11.900M11.300 17.250h11.900" stroke-width="1.800"/></svg>
<span class="a t" style="left:490.80px;top:257px;font-size:8.37px;line-height:10px;color:#57636c;">Drag Elements into</span>
<span class="a t" style="left:504.00px;top:267px;font-size:8.52px;line-height:10px;color:#57636c;">this Column</span>
<div class="a" style="left:628px;top:67px;width:16px;height:16px;background:#262d34;border-radius:3.5px;"></div>
<svg class="a" style="left:631.400px;top:72.700px" width="9" height="5" viewBox="0 0 9 5" fill="none" stroke="#fff" stroke-width=".8"><rect x=".7" y="1.100" width="7.600" height="2.800" rx=".8"/><path d="M4.500 1.100v2.800"/></svg>
<div class="a" style="left:628px;top:459.5px;width:16px;height:15.5px;background:#262d34;border-radius:3.5px;"></div>
<svg class="a" style="left:631.500px;top:463px" width="9" height="8" viewBox="0 0 9 8" fill="none" stroke="#fff" stroke-width=".9"><rect x=".6" y=".8" width="7.800" height="6.200" rx=".6"/><path d="M1.600 5.800h5.800" stroke-width="1.400"/></svg>
<div class="a" style="left:868.6px;top:49px;width:156px;height:0.8px;background:#181d21;"></div>
<span class="a t" style="left:876.80px;top:35px;font-size:7.17px;line-height:8px;color:#95a1ac;font-weight:700;">Page Parameters</span>
<svg class="a" style="left:938.7px;top:33.5px" width="10" height="10" viewBox="-5 -5 10 10" fill="none" stroke="#aab4bd" stroke-width="0.75"><circle r="3.3"/><path d="M0 -0.300V1.600M0 -1.700V-1.600" stroke-linecap="round" stroke-width=".7"/></svg>
<div class="a" style="left:1013.3px;top:38px;width:8.4px;height:0.9px;background:#95a1ac;"></div>
<div class="a" style="left:1017.05px;top:34.3px;width:0.9px;height:8.4px;background:#95a1ac;"></div>
<span class="a t" style="left:876.80px;top:57px;font-size:7.07px;line-height:7px;color:#95a1ac;font-weight:700;">Route Settings</span>
<svg class="a" style="left:930.4px;top:55.5px" width="10" height="10" viewBox="-5 -5 10 10" fill="none" stroke="#aab4bd" stroke-width="0.75"><circle r="3.3"/><path d="M0 -0.300V1.600M0 -1.700V-1.600" stroke-linecap="round" stroke-width=".7"/></svg>
<svg class="a" style="left:1013px;top:55.500px" width="8" height="10" viewBox="0 0 8 10" fill="none" stroke="#95a1ac" stroke-width="1" stroke-linecap="round" stroke-linejoin="round"><path d="M2.500 1.500L6 5 2.500 8.500"/></svg>
<svg class="a" style="left:876px;top:77px" width="7" height="9" viewBox="0 0 7 9" fill="none" stroke="#fff" stroke-width="1"><rect x="1.300" y="0.900" width="4.200" height="7.100" rx="1"/><path d="M1.300 2.100h4.200M1.300 6.800h4.200" stroke-width=".8"/></svg>
<span class="a t" style="left:886.60px;top:78px;font-size:6.57px;line-height:7px;color:#fff;font-weight:700;">Scaffold</span>
<div class="a" style="left:875.25px;top:90.25px;width:104.4px;height:17px;background:#0b1013;border:1px solid #262d34;border-radius:4.5px;"></div>
<span class="a t" style="left:881.00px;top:95px;font-size:6.89px;line-height:7px;color:#fff;font-weight:700;">HomePage</span>
<div class="a" style="left:984.2px;top:90.25px;width:17px;height:17px;background:#161b1f;border:1px solid #262d34;border-radius:4.5px;"></div>
<svg class="a" style="left:987.90px;top:94.00px" width="10" height="10" viewBox="0 0 24 24" fill="none" stroke="#e0e3e7" stroke-width="1.8" stroke-linecap="round" stroke-linejoin="round"><rect x="7" y="7" width="13" height="13" rx="3"/><path d="M16 4H8a4 4 0 0 0-4 4v8"/><circle cx="13.500" cy="13.500" r="2"/></svg>
<div class="a" style="left:1006.3px;top:90.25px;width:17px;height:17px;background:#161b1f;border:1px solid #262d34;border-radius:4.5px;"></div>
<svg class="a" style="left:1011px;top:94.500px" width="9" height="10" viewBox="0 0 9 10" fill="#e0e3e7"><path d="M1.500 3h6v5.800a.8.800 0 0 1-.8.800H2.300a.8.800 0 0 1-.8-.8zM.8 1.500h2L3.400.8h2.200l.6.700h2v1H.8z"/><path d="M3.200 4.200v4M4.500 4.200v4M5.800 4.200v4" stroke="#161b1f" stroke-width=".5"/></svg>
<div class="a" style="left:875.25px;top:113.2px;width:147.8px;height:21.6px;background:#0b1013;border:1px solid #1d2428;border-radius:4.5px;"></div>
<span class="a t" style="left:883.80px;top:120px;font-size:7.23px;line-height:9px;color:#57636c;">Describe your page here...</span>
<div class="a" style="left:875.25px;top:140.7px;width:150px;height:18.5px;background:#1d2428;border-radius:4.5px;"></div>
<div class="a" style="left:876.3px;top:142px;width:27.6px;height:16.3px;background:#111416;border-radius:3.5px;"></div>
<svg class="a" style="left:883.20px;top:143.80px" width="14" height="14" viewBox="-7 -7 14 14" fill="none" stroke="#fff" stroke-width="0.95" stroke-linecap="round" stroke-linejoin="round"><rect x="-6.200" y="-1.700" width="12.400" height="3.400" rx=".7" transform="rotate(45)"/><path d="M-3.500 -1.700v1.500M-1.200 -1.700v1.500M1.200 -1.700v1.500M3.500 -1.700v1.500" transform="rotate(45)" stroke-width=".6"/><path d="M-6.200 -1.600H3.200L6.400 0L3.200 1.600H-6.200z" transform="rotate(135)" fill="#111416"/><path d="M3.200 -1.600V1.600" transform="rotate(135)" stroke-width=".6"/></svg>
<svg class="a" style="left:912.50px;top:143.80px" width="14" height="14" viewBox="-7 -7 14 14" fill="none" stroke="#95a1ac" stroke-width="0.9" stroke-linecap="round" stroke-linejoin="round"><circle cx="-4" cy="-4" r="1"/><path d="M-4 -3v2.500a4 4 0 0 0 4 4h2.500M1.500 2l1.700 1.500L1.500 5"/><path d="M0.600 -4.800V0.800L2.200 -0.600L3.300 1.500M0.600 -4.800L4.600 -1.200H2.500" stroke-width=".8"/></svg>
<svg class="a" style="left:942.60px;top:143.60px" width="14" height="14" viewBox="-7 -7 14 14" fill="none" stroke="#95a1ac" stroke-width="0.9" stroke-linecap="round" stroke-linejoin="round"><rect x="-4.800" y="-5" width="9.600" height="10" rx="1.200"/><path d="M-4.800 -1.700H4.800M-4.800 1.700H4.800"/><path d="M2.300 -3.400h1.100M2.300 0h1.100M2.300 3.400h1.100" stroke-width=".7"/></svg>
<svg class="a" style="left:975.900px;top:146.500px" width="7" height="8" viewBox="0 0 7 8" fill="#95a1ac"><path d="M0.800 .7L6.200 4 0.800 7.300z"/></svg>
<svg class="a" style="left:1001.50px;top:143.60px" width="14" height="14" viewBox="-7 -7 14 14" fill="none" stroke="#95a1ac" stroke-width="0.9" stroke-linecap="round" stroke-linejoin="round"><rect x="-4.200" y="-5" width="8.400" height="10" rx="1.600"/><path d="M-2.600 -5v1.200h5.200V-5" stroke-width=".7"/><path d="M-2.300 -1.200h1.600l.7 .9h2.300v3h-4.600z" stroke-width=".8"/></svg>
<span class="a t" style="left:875.25px;top:169px;font-size:6.41px;line-height:7px;color:#fff;font-weight:700;">Visibility</span>
<svg class="a" style="left:902.3px;top:168px" width="10" height="10" viewBox="-5 -5 10 10" fill="none" stroke="#66727d" stroke-width="0.75"><circle r="2.8"/><path d="M0 -0.300V1.600M0 -1.700V-1.600" stroke-linecap="round" stroke-width=".7"/></svg>
<svg class="a" style="left:1014.25px;top:170.175px" width="8.5" height="6.25" viewBox="-1 -1.500 8.5 6.25" fill="none" stroke="#95a1ac" stroke-width="1" stroke-linecap="round" stroke-linejoin="round"><path d="M0 0L3.25 3.25L6.5 0"/></svg>
<span class="a t" style="left:875.25px;top:183px;font-size:7.15px;line-height:8px;color:#95a1ac;">Opacity</span>
<svg class="a" style="left:900.3px;top:181.3px" width="10" height="10" viewBox="-5 -5 10 10" fill="none" stroke="#66727d" stroke-width="0.75"><circle r="2.8"/><path d="M0 -0.300V1.600M0 -1.700V-1.600" stroke-linecap="round" stroke-width=".7"/></svg>
<svg class="a" style="left:911.3px;top:182.3px" width="8" height="8" viewBox="0 0 8 8" fill="none" stroke="#ee8b60" stroke-width=".9" stroke-linecap="round"><circle cx="1.700" cy="2.500" r=".9"/><path d="M4 2.500h3.300"/><circle cx="6.300" cy="6.300" r=".9"/><path d="M.7 6.300H4"/></svg>
<div class="a" style="left:878.5px;top:199.8px;width:88px;height:2.8px;background:#4534ea;border-radius:1.4px;"></div>
<div class="a" style="left:962.800px;top:197.500px;width:7.400px;height:7.400px;border-radius:50%;background:#fff"></div>
<div class="a" style="left:974px;top:192.3px;width:55px;height:17.3px;background:#0f1316;border:1px solid #262d34;border-radius:4.5px;"></div>
<span class="a t" style="left:980.80px;top:198px;font-size:7.00px;line-height:7px;color:#fff;font-weight:700;letter-spacing:0.007px;">1</span>
<div class="a" style="left:868.6px;top:215px;width:156px;height:0.8px;background:#1d2428;"></div>
<span class="a t" style="left:875.25px;top:222px;font-size:6.46px;line-height:7px;color:#fff;font-weight:700;">Page (Scaffold) Properties</span>
<svg class="a" style="left:957.3px;top:220.5px" width="10" height="10" viewBox="-5 -5 10 10" fill="none" stroke="#66727d" stroke-width="0.75"><circle r="2.8"/><path d="M0 -0.300V1.600M0 -1.700V-1.600" stroke-linecap="round" stroke-width=".7"/></svg>
<svg class="a" style="left:1014.25px;top:222.675px" width="8.5" height="6.25" viewBox="-1 -1.500 8.5 6.25" fill="none" stroke="#95a1ac" stroke-width="1" stroke-linecap="round" stroke-linejoin="round"><path d="M0 0L3.25 3.25L6.5 0"/></svg>
<span class="a t" style="left:875.25px;top:236px;font-size:6.71px;line-height:7px;color:#95a1ac;">Background Color</span>
<svg class="a" style="left:931.8px;top:235.3px" width="8" height="8" viewBox="0 0 8 8" fill="none" stroke="#ee8b60" stroke-width=".9" stroke-linecap="round"><circle cx="1.700" cy="2.500" r=".9"/><path d="M4 2.500h3.300"/><circle cx="6.300" cy="6.300" r=".9"/><path d="M.7 6.300H4"/></svg>
<div class="a" style="left:875px;top:246.2px;width:71px;height:16.7px;border:1px solid #262d34;border-radius:4.5px;"></div>
<div class="a" style="left:880.3px;top:251.2px;width:6.4px;height:6.4px;background:#f1f4f8;border-radius:1.5px;"></div>
<span class="a t" style="left:892.80px;top:248px;font-size:5.77px;line-height:6px;color:#fff;font-weight:700;">Primary</span>
<span class="a t" style="left:892.80px;top:256px;font-size:5.83px;line-height:6px;color:#fff;font-weight:700;">Background</span>
<svg class="a" style="left:933.800px;top:251.300px" width="6" height="6" viewBox="0 0 6 6" stroke="#95a1ac" stroke-width=".8" stroke-linecap="round"><path d="M1 1l4 4M5 1L1 5"/></svg>
<span class="a t" style="left:875.25px;top:270px;font-size:6.55px;line-height:7px;color:#95a1ac;">Safe Area</span>
<svg class="a" style="left:905.3px;top:269.1px" width="10" height="10" viewBox="-5 -5 10 10" fill="none" stroke="#66727d" stroke-width="0.75"><circle r="2.8"/><path d="M0 -0.300V1.600M0 -1.700V-1.600" stroke-linecap="round" stroke-width=".7"/></svg>
<div class="a" style="left:1000.8px;top:268.15px;width:23.2px;height:12.5px;background:#4534ea;border-radius:6.25px;"></div>
<div class="a" style="left:1011.500px;top:268.70px;width:11.400px;height:11.400px;border-radius:50%;background:#fff"></div>
<span class="a t" style="left:875.25px;top:289px;font-size:6.65px;line-height:7px;color:#95a1ac;">Hide Keyboard on Tap</span>
<svg class="a" style="left:942.4px;top:287.2px" width="10" height="10" viewBox="-5 -5 10 10" fill="none" stroke="#66727d" stroke-width="0.75"><circle r="2.8"/><path d="M0 -0.300V1.600M0 -1.700V-1.600" stroke-linecap="round" stroke-width=".7"/></svg>
<div class="a" style="left:1000.8px;top:286.15px;width:23.2px;height:12.5px;background:#4534ea;border-radius:6.25px;"></div>
<div class="a" style="left:1011.500px;top:286.70px;width:11.400px;height:11.400px;border-radius:50%;background:#fff"></div>
<span class="a t" style="left:875.25px;top:307px;font-size:6.76px;line-height:7px;color:#95a1ac;">Disable Android Back Button</span>
<svg class="a" style="left:962.1px;top:305.5px" width="10" height="10" viewBox="-5 -5 10 10" fill="none" stroke="#66727d" stroke-width="0.75"><circle r="2.8"/><path d="M0 -0.300V1.600M0 -1.700V-1.600" stroke-linecap="round" stroke-width=".7"/></svg>
<div class="a" style="left:1000.8px;top:304.2px;width:23.2px;height:13px;background:#15191c;border:1px solid #20262b;border-radius:6.5px;"></div>
<div class="a" style="left:1001.200px;top:304.80px;width:11.800px;height:11.800px;border-radius:50%;background:#272e35"></div>
<div class="a" style="left:868.6px;top:323.3px;width:156px;height:0.8px;background:#1d2428;"></div>
<span class="a t" style="left:875.25px;top:330px;font-size:6.50px;line-height:7px;color:#fff;font-weight:700;">Nav Bar Item Properties</span>
<svg class="a" style="left:950.3px;top:328.7px" width="10" height="10" viewBox="-5 -5 10 10" fill="none" stroke="#66727d" stroke-width="0.75"><circle r="2.8"/><path d="M0 -0.300V1.600M0 -1.700V-1.600" stroke-linecap="round" stroke-width=".7"/></svg>
<svg class="a" style="left:1014.25px;top:330.875px" width="8.5" height="6.25" viewBox="-1 -1.500 8.5 6.25" fill="none" stroke="#95a1ac" stroke-width="1" stroke-linecap="round" stroke-linejoin="round"><path d="M0 0L3.25 3.25L6.5 0"/></svg>
<span class="a t" style="left:875.25px;top:346px;font-size:6.51px;line-height:7px;color:#95a1ac;">Show on Nav Bar</span>
<div class="a" style="left:1000.8px;top:343.5px;width:23.2px;height:13px;background:#15191c;border:1px solid #20262b;border-radius:6.5px;"></div>
<div class="a" style="left:1001.200px;top:344.10px;width:11.800px;height:11.800px;border-radius:50%;background:#272e35"></div>
<span class="a t" style="left:875.25px;top:364px;font-size:6.48px;line-height:7px;color:#95a1ac;">Always Show Nav Bar on Page</span>
<svg class="a" style="left:966.5px;top:363px" width="10" height="10" viewBox="-5 -5 10 10" fill="none" stroke="#66727d" stroke-width="0.75"><circle r="2.8"/><path d="M0 -0.300V1.600M0 -1.700V-1.600" stroke-linecap="round" stroke-width=".7"/></svg>
<div class="a" style="left:1000.8px;top:361.7px;width:23.2px;height:13px;background:#15191c;border:1px solid #20262b;border-radius:6.5px;"></div>
<div class="a" style="left:1001.200px;top:362.30px;width:11.800px;height:11.800px;border-radius:50%;background:#20262b"></div>
<div class="a" style="left:993.200px;top:477.700px;width:26px;height:26px;border-radius:50%;background:#4534ea;box-shadow:0 1px 3px rgba(0,0,0,.4)"></div>
<svg class="a" style="left:997.400px;top:481.600px" width="18" height="18" viewBox="0 0 16 16" fill="none" stroke="#fff" stroke-linecap="round"><circle cx="7" cy="7" r="4.600" stroke-width="1.300"/><path d="M10.600 10.600L13.800 13.800" stroke-width="2"/><path d="M5 8a2.300 2.300 0 0 0 4 0" stroke-width=".9"/></svg>
</div></body></html>
